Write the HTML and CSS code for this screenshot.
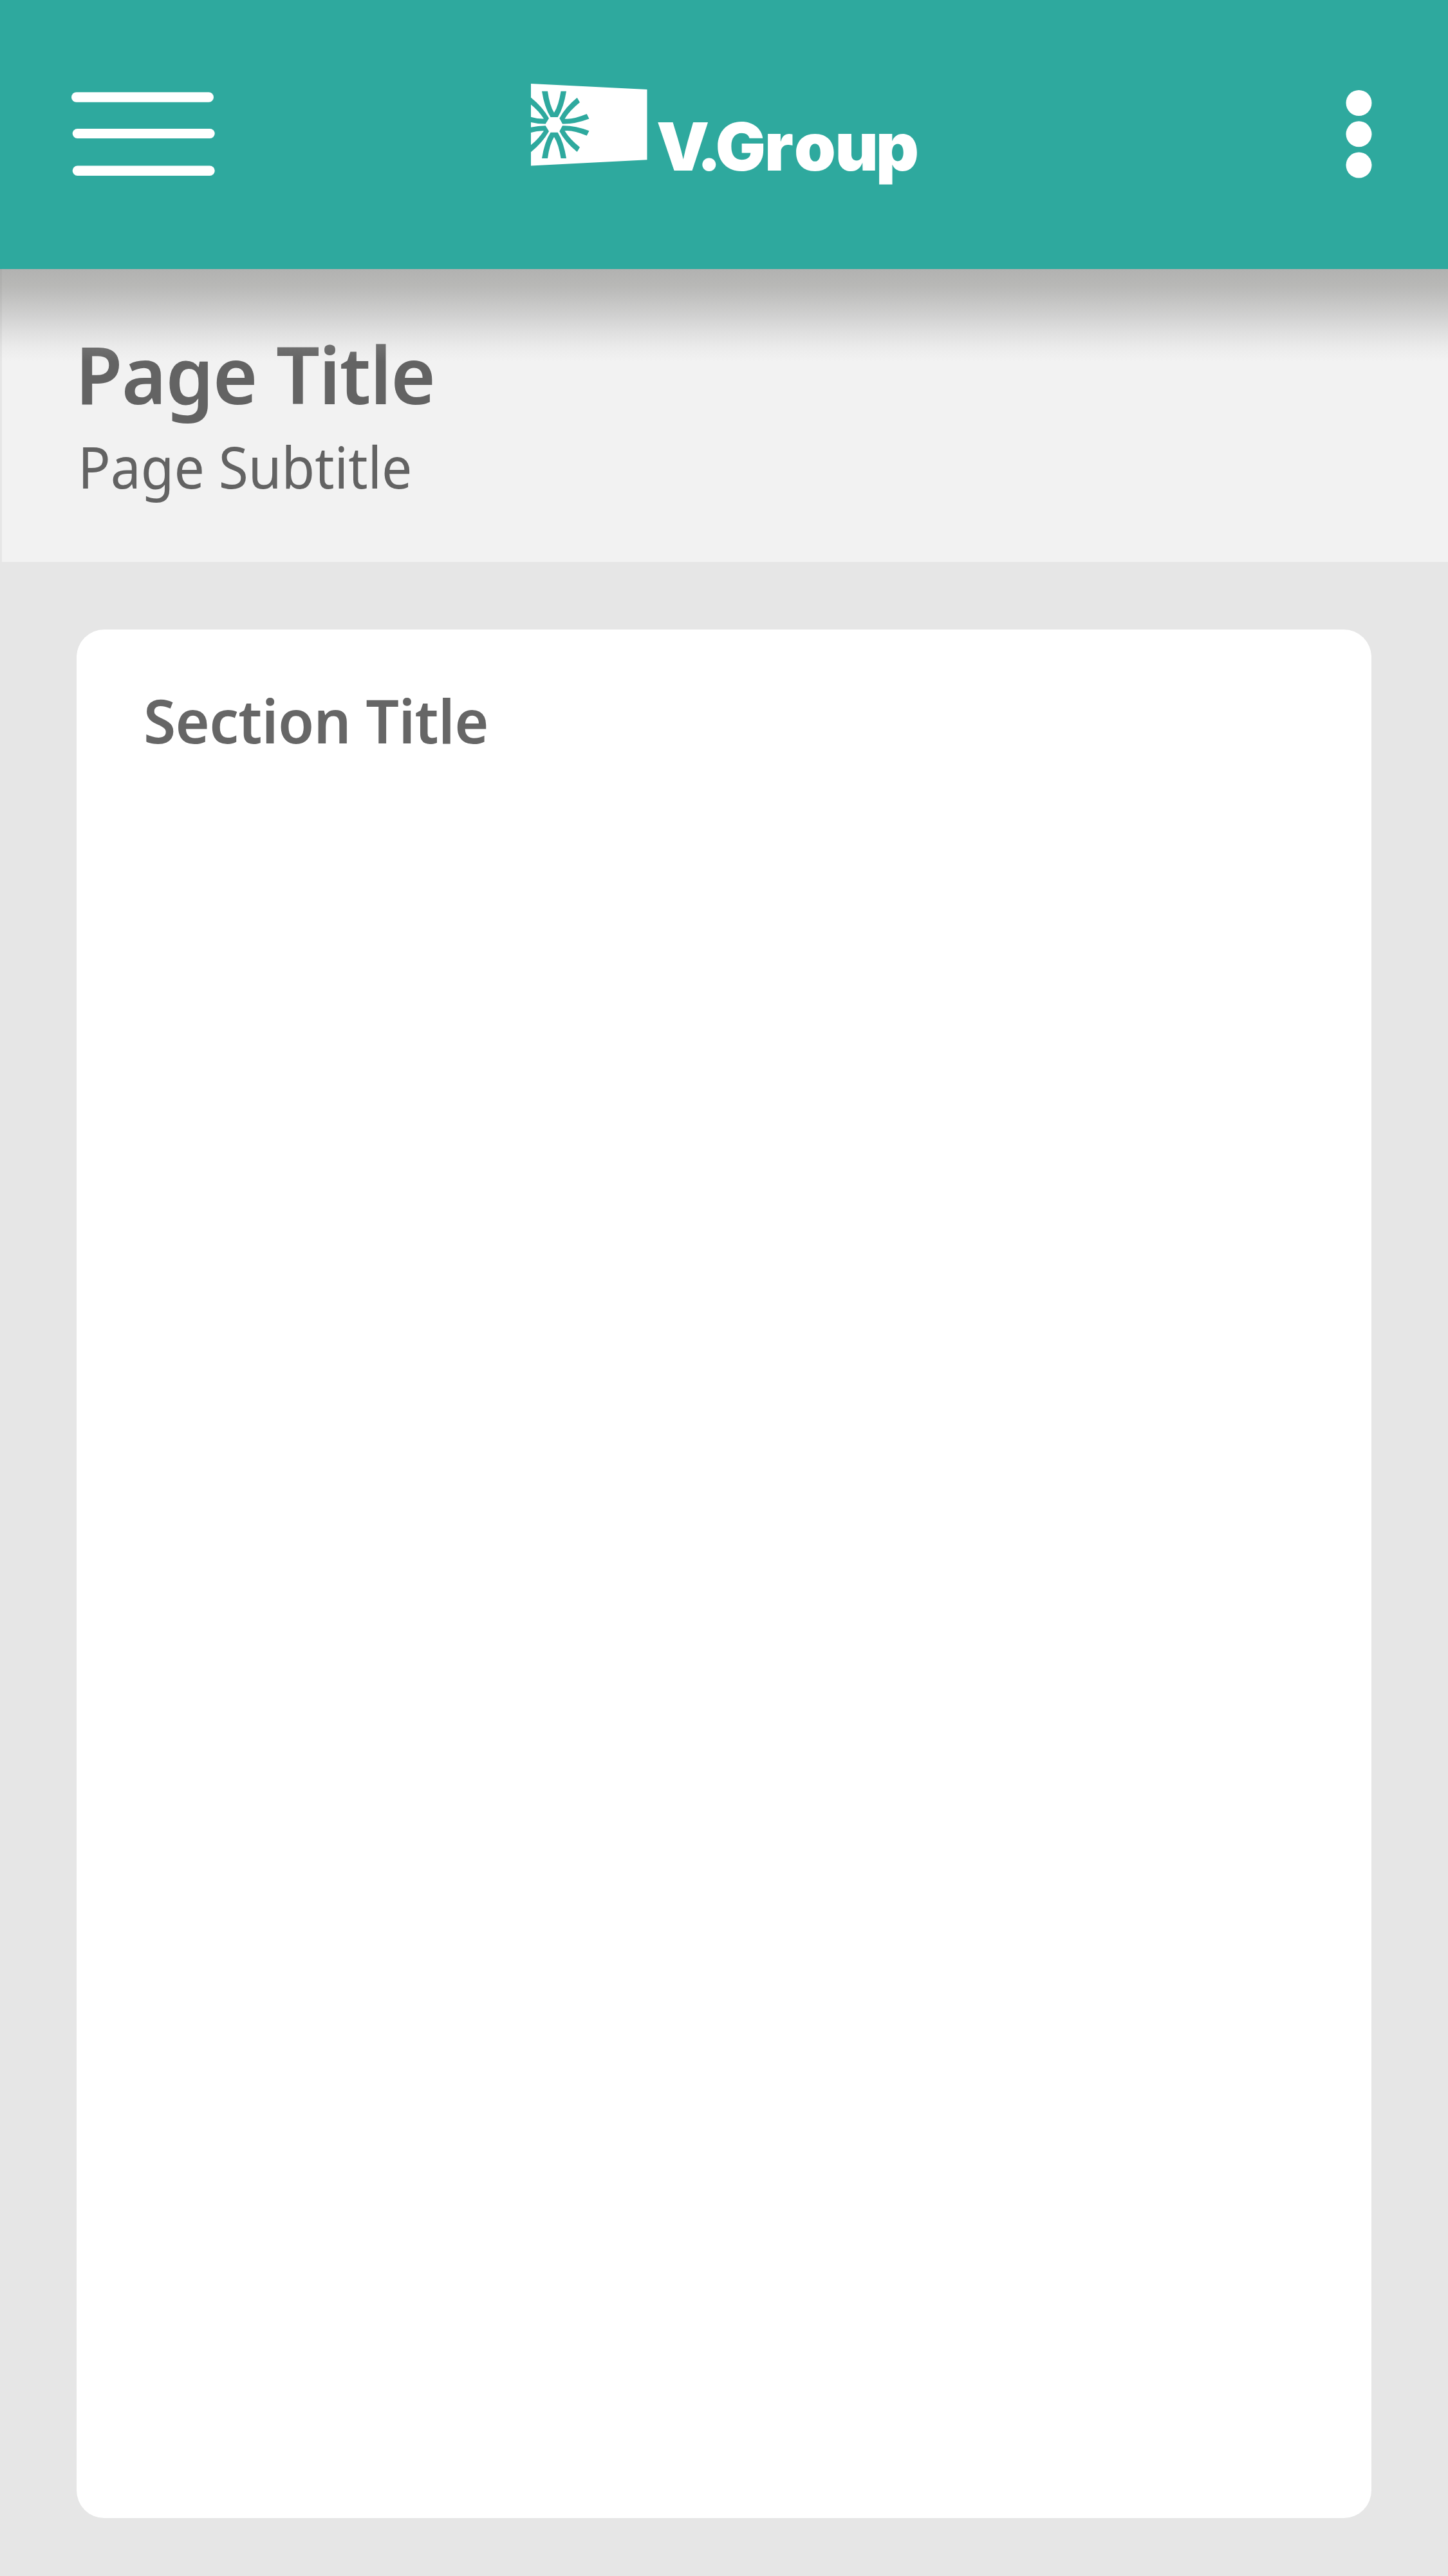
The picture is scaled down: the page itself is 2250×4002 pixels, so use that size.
FILE: index.html
```html
<!DOCTYPE html>
<html lang="en">
<head>
<meta charset="utf-8">
<title>V.Group</title>
<link rel="stylesheet" href="styles.css">
</head>
<body>
<header class="app-bar">
  <svg class="menu-icon" viewBox="0 0 224 131" aria-label="Menu">
    <rect x="0" y="0.3" width="221" height="15.5" rx="7.7"/>
    <rect x="1.7" y="57" width="221" height="15" rx="7.5"/>
    <rect x="1.7" y="114.5" width="221" height="15.5" rx="7.7"/>
  </svg>
  <svg class="logo" viewBox="825 130 602 158" aria-label="V.Group">
    <clipPath id="panel"><path d="M825 130L1005.5 139V248.3L825 257.5z"/></clipPath>
    <path d="M825 130L1005.5 139V248.3L825 257.5z"/>
    <g class="rays" clip-path="url(#panel)">
      <g id="rays-top">
        <path d="M842 141.7H851Q854 164 861 175Q868 164 871.5 141.7H880Q876 167 866.7 182H855.5Q846 167 842 141.7z"/>
        <path d="M896.7 151.7L901 159Q885 172 877.5 184.5Q890 186 911.7 177L915.5 184.5Q893 193 874 192.5L869.3 183.7Q878 167 896.7 151.7z"/>
        <path d="M825 151.5Q843 166 853 183.7L847.7 192.5Q836 192.5 825 190V181.7Q836 185 845 184.5Q837 172 825 162.5z"/>
      </g>
      <use href="#rays-top" transform="matrix(1 0 0 -1 0 387.7)"/>
    </g>
    <text class="logo-text" y="265.3" x="1020 1082.5 1111.7 1188 1234 1297.5 1361">V.Group</text>
  </svg>
  <svg class="more-icon" viewBox="0 0 41 137" aria-label="More">
    <circle cx="20.5" cy="20" r="20"/>
    <circle cx="20.5" cy="68.3" r="20"/>
    <circle cx="20.5" cy="116.6" r="20"/>
  </svg>
</header>
<section class="page-head">
  <h1 class="page-title">Page Title</h1>
  <p class="page-subtitle">Page Subtitle</p>
</section>
<main class="content">
  <article class="card"><h2 class="section-title">Section Title</h2></article>
</main>
</body>
</html>
```

FILE: styles.css
```css
* { box-sizing: border-box; margin: 0; padding: 0; }
body {
  display: flex;
  flex-direction: column;
  width: 2250px;
  height: 4002px;
  background: #e6e6e6;
  color: #636363;
  font-family: "Noto Sans", sans-serif;
}
.app-bar {
  display: grid;
  grid-template-columns: 714px 602px 41px;
  justify-content: start;
  align-items: start;
  height: 418px;
  padding: 130px 118px 0 111px;
  background: #2ea99e;
}
.app-bar svg { display: block; overflow: visible; fill: #fff; }
.app-bar .rays { fill: #2ea99e; }
.menu-icon { width: 224px; height: 131px; margin-top: 13px; }
.logo { width: 602px; height: 158px; }
.more-icon { width: 41px; height: 137px; margin: 10px 0 0 664px; }
.logo-text { font: 900 103.6px Inter, sans-serif; }
.page-head {
  position: relative;
  height: 455px;
  margin-left: 3px;
  padding: 79px 0 0 114.1px;
  background: #f2f2f2;
}
/* shadow cast by the app bar */
.page-head::after {
  content: "";
  position: absolute;
  inset: 0 0 auto -3px;
  height: 144px;
  background: linear-gradient(rgba(116,116,114,.51), rgba(116,116,112,.46) 18%, rgba(120,120,119,.3) 46%, rgba(150,150,150,.24) 64%, rgba(190,190,190,.13) 85%, rgba(200,200,200,0));
}
.page-title, .page-subtitle, .section-title {
  width: max-content;
  white-space: nowrap;
  transform-origin: left;
}
.page-title {
  font-size: 123px;
  font-weight: 600;
  line-height: 168px;
  letter-spacing: -1.4px;
  transform: scaleX(.97);
}
.page-subtitle {
  margin-left: 3.7px;
  font-size: 89px;
  line-height: 120px;
  transform: scaleX(.943);
}
.content { display: flex; flex: 1; padding: 104.7px 118.7px 90px 118.5px; }
.card { flex: 1; border-radius: 43px; background: #fff; padding: 77px 104.6px; }
.section-title {
  color: #666;
  font-size: 94px;
  font-weight: 600;
  line-height: 128px;
  letter-spacing: -.65px;
  transform: scaleX(.97);
}
```
